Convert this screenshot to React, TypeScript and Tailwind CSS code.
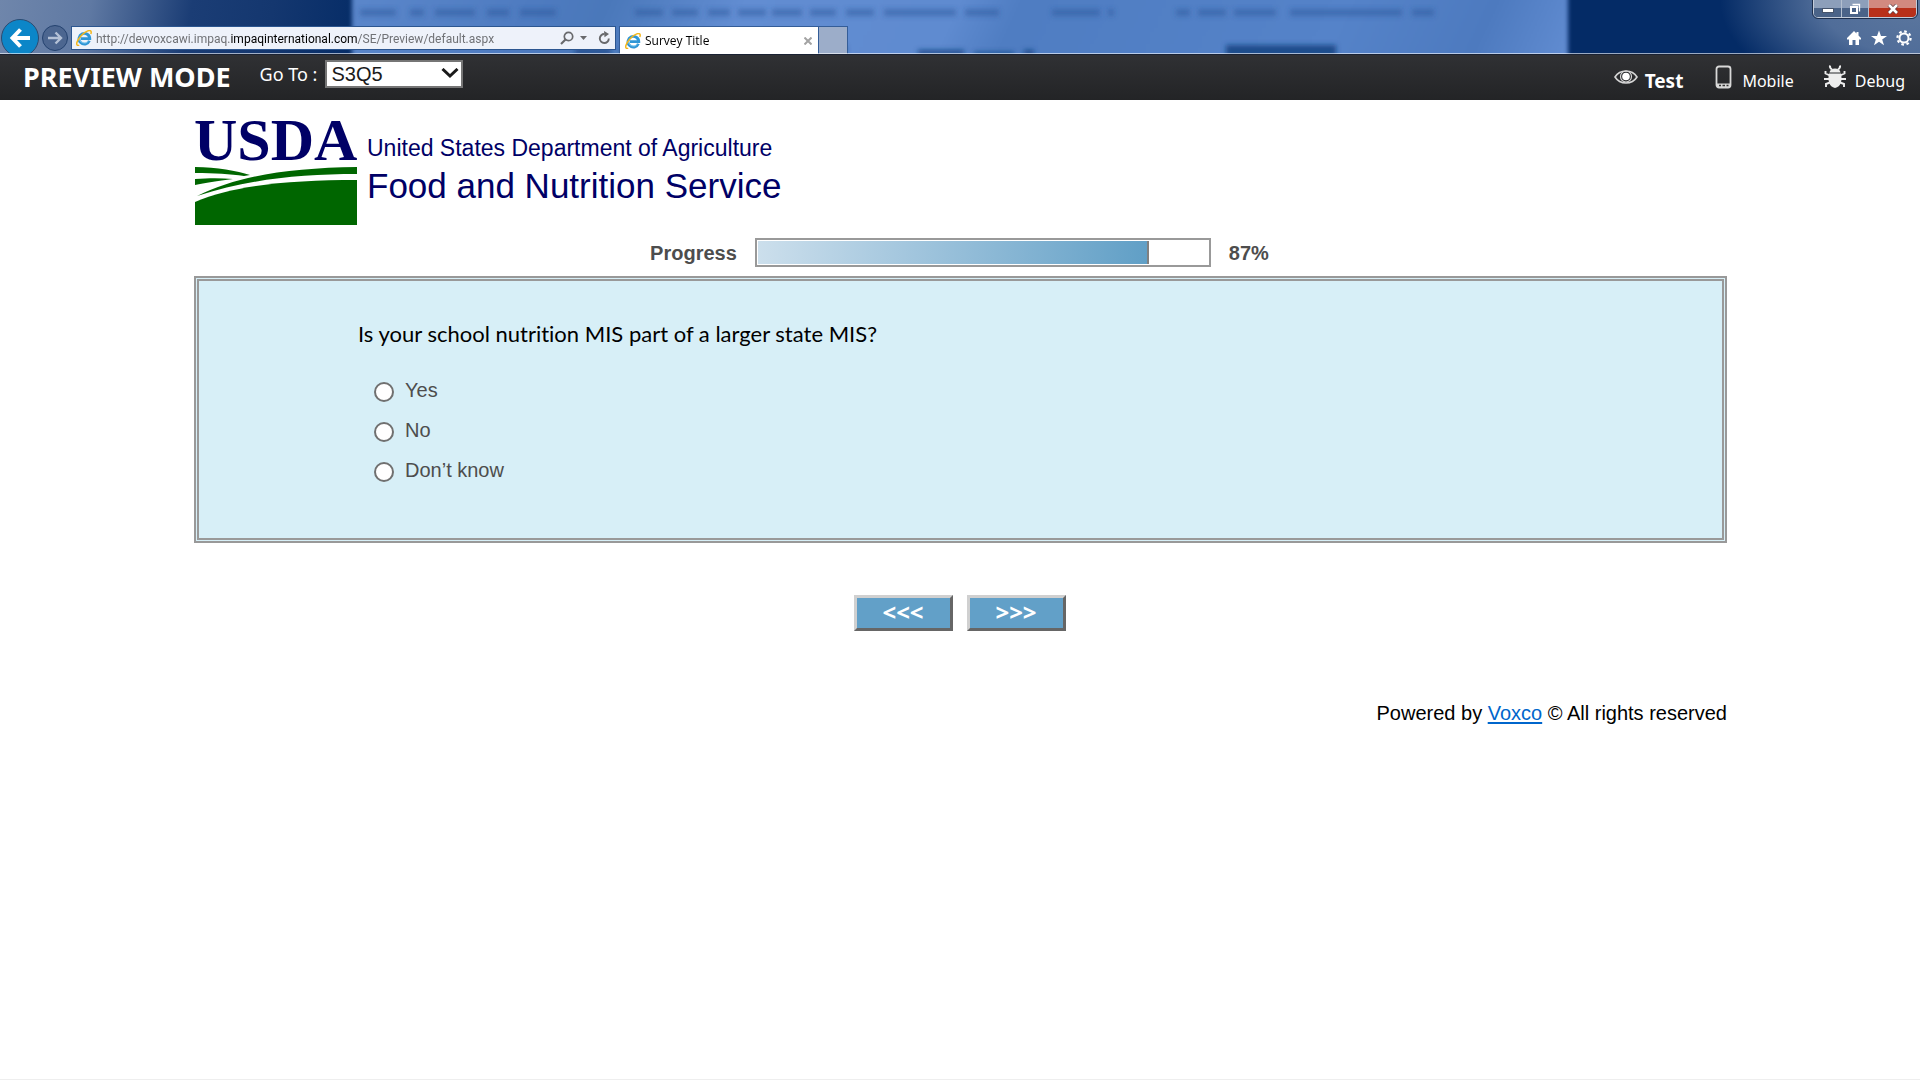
import React from 'react';

const ghostWords = [
  [360, 36], [410, 14], [435, 40], [487, 22], [520, 36], [635, 28], [672, 26], [708, 22], [738, 28], [772, 30], [810, 26], [846, 28],
  [884, 72], [965, 34], [1052, 48], [1108, 6], [1176, 14], [1198, 28], [1234, 42], [1290, 112], [1412, 22],
];

const ghostShapes = [
  [575, 49, 36, 5], [620, 50, 60, 4], [826, 46, 20, 7], [918, 50, 46, 5], [974, 52, 40, 3], [1024, 50, 10, 5], [1226, 45, 110, 12],
];

const options = ['Yes', 'No', 'Don’t know'];

function IeIcon() {
  return <svg viewBox="0 0 16 16" className="w-4 h-4 shrink-0" fill="none" aria-hidden="true">
      <path d="M13.4 10.8A5.400 5.400 0 1 1 13.800 8.600H5" stroke="#2f96d6" strokeWidth="2.800" />
      <path d="M12.600 10.800A4.900 4.900 0 0 1 3.600 7.600" stroke="#8fd2f5" strokeWidth="0.900" />
      <path d="M3.200 15.200C1.200 16 .2 14.600 1 12.200C2.400 8 7.400 2.400 11.800 .9C14.800 -.1 15.800 1.400 14.800 4" stroke="#f3b61b" strokeWidth="1.500" />
    </svg>;
}

function BrowserBar() {
  return <header className="relative h-[54px] overflow-hidden bg-[#042b66] font-['Open_Sans',sans-serif]">
      {/* glass background with the blurred window behind it */}
      <div className="absolute inset-0 bg-[linear-gradient(100deg,#6f86ab_0,#5f79a3_90px,#1b3d75_190px,#14376f_270px,#042b66_370px)]"></div>
      <div className="absolute inset-y-0 right-0 w-[220px] bg-[radial-gradient(ellipse_200px_110px_at_100%_0,#5d789f_0,#506d99_50%,transparent_100%)]"></div>
      <div className="absolute inset-y-[-10px] left-[352px] right-[352px] bg-[linear-gradient(115deg,#5b87cb_0,#4e7bc0_15%,#4a78ba_21%,#628dd2_32%,#5f8bd0_49%,#4f7dc2_54%,#5583c9_80%,#4d7abf_92%,#628dd2_100%)] blur-[2px]"></div>
      <svg className="absolute left-0 top-0 h-[54px] w-[1920px]" aria-hidden="true">
        <defs>
          <filter id="soft"><feGaussianBlur stdDeviation="2.800" /></filter>
        </defs>
        <g filter="url(#soft)">
          {ghostWords.map(([x, w]) => <rect key={x} x={x} y="9" width={w} height="7" fill="#2d569b" opacity="0.5" />)}
          {ghostShapes.map(([x, y, w, h]) => <rect key={x} x={x} y={y} width={w} height={h} fill="#143d7c" opacity="0.8" />)}
        </g>
      </svg>

      <div className="relative flex h-full">
        <button aria-label="Back" className="mt-[19px] ml-px flex size-[38px] shrink-0 items-center justify-center rounded-full border border-[#2c4a70] bg-[#0c86c8]">
          <svg viewBox="0 0 24 24" className="w-6 h-6" fill="none" stroke="#fff" strokeWidth="4">
            <path d="M22 12H5M12.500 3.500L4.500 12L12.500 20.500" />
          </svg>
        </button>
        <button aria-label="Forward" className="mt-[25px] ml-[3px] flex size-[26px] shrink-0 items-center justify-center rounded-full border border-[#24426f] bg-[#4c6690]">
          <svg viewBox="0 0 16 16" className="w-4 h-4" fill="none" stroke="#b4c1d6" strokeWidth="2.400">
            <path d="M1 8H13M8.500 2.500L14 8L8.500 13.500" />
          </svg>
        </button>
        <div className="mt-[26px] ml-[3px] flex h-6 w-[545px] shrink-0 items-center border border-[#2c5690] bg-[#eef2fa] pl-1 pr-1 text-[12px] text-[#707276]">
          <IeIcon />
          <span className="ml-1 flex-1 whitespace-nowrap pt-px font-['Roboto',sans-serif]">
            http://devvoxcawi.impaq.<span className="text-black">impaqinternational.com</span>/SE/Preview/default.aspx
          </span>
          <svg viewBox="0 0 14 14" className="w-3.5 h-3.5" fill="none" stroke="#68696c" strokeWidth="1.700">
            <circle cx="8.500" cy="5.500" r="4.200" />
            <path d="M5.500 8.500L1 13" strokeWidth="2.200" />
          </svg>
          <svg viewBox="0 0 7 4" className="mx-1.5 w-[7px] h-1" fill="#68696c"><path d="M0 0H7L3.500 4Z" /></svg>
          <svg viewBox="0 0 14 14" className="ml-1 w-3.5 h-3.5" fill="none" stroke="#68696c" strokeWidth="1.900">
            <path d="M7.500 3A4.500 4.500 0 1 0 11.800 7.500" />
            <path d="M7 0L12 3L7.500 6.200Z" fill="#68696c" stroke="none" />
          </svg>
        </div>
        <div className="mt-[26px] ml-[3px] flex h-7 w-[200px] shrink-0 items-center border border-b-0 border-[#345d98] bg-white pl-[5px] pr-1.5 text-[12px] text-black">
          <IeIcon />
          <span className="ml-1 flex-1">Survey Title</span>
          <svg viewBox="0 0 8 8" className="w-2 h-2" stroke="#a3a3a3" strokeWidth="2"><path d="M.5 .5L7.500 7.500M7.500 .5L.5 7.500" /></svg>
        </div>
        <div className="mt-[26px] h-7 w-[29px] shrink-0 border border-b-0 border-l-0 border-[#345d98] bg-[#9cadc9]"></div>

        <div className="ml-auto mr-[3px] flex shrink-0 flex-col items-end">
          <div className="flex h-[18px] overflow-hidden rounded-b-[5px] border border-t-0 border-[#c3ccda] outline outline-[#1d2f4d]">
            <button aria-label="Minimize" className="flex w-7 items-end justify-center border-r border-[#b3bfd0] bg-linear-to-b from-[#8d9fba] from-50% to-[#4a6388] to-50% pb-1">
              <span className="h-[5px] w-3 border border-[#46546b] bg-white"></span>
            </button>
            <button aria-label="Restore" className="flex w-[27px] items-center justify-center border-r border-[#b3bfd0] bg-linear-to-b from-[#8d9fba] from-50% to-[#4a6388] to-50%">
              <svg viewBox="0 0 12 12" className="w-3 h-3" fill="none" stroke="#fff">
                <path d="M3.500 1.500H10.500V8.500" strokeWidth="1.300" />
                <rect x="2" y="4" width="6" height="6" strokeWidth="2" />
              </svg>
            </button>
            <button aria-label="Close" className="flex w-[47px] items-center justify-center bg-linear-to-b from-[#d28a80] from-45% to-[#b8301a] to-50%">
              <svg viewBox="0 0 12 10" className="w-3 h-2.5" fill="none">
                <path d="M2 1L10 9M10 1L2 9" stroke="#5d3a40" strokeWidth="4" />
                <path d="M2 1L10 9M10 1L2 9" stroke="#fff" strokeWidth="2.600" />
              </svg>
            </button>
          </div>
          <div className="mt-3 mr-[5px] flex items-center gap-[9px]">
            <svg viewBox="0 0 16 16" className="w-4 h-4" fill="#fff"><path d="M8 1L1 8V9.500H3V15H6.500V10H9.500V15H13V9.500H15V8L12.500 5.500V2H10.500V3.500Z" /></svg>
            <svg viewBox="0 0 16 16" className="w-4 h-4" fill="#fff"><path d="M8 .5L10 6H16L11.200 9.400L13 15.200L8 11.700L3 15.200L4.800 9.400L0 6H6Z" /></svg>
            <svg viewBox="0 0 16 16" className="w-4 h-4" fill="none" stroke="#fff">
              <circle cx="8" cy="8" r="4.500" strokeWidth="2" />
              <circle cx="8" cy="8" r="6.600" strokeWidth="2.200" strokeDasharray="2.590 2.590" />
            </svg>
          </div>
        </div>
      </div>
      <div className="absolute inset-x-0 bottom-0 h-px bg-white/60"></div>
    </header>;
}

function PreviewBar() {
  return <div className="flex h-[46px] items-start border-t border-[#1a2233] bg-linear-to-b from-[#303134] to-[#232426] pl-[23px] pr-[15px] font-['Noto_Sans',sans-serif] text-[16px] leading-6 text-white">
      <h1 className="mt-2.5 text-[27px] leading-6 font-bold">PREVIEW MODE</h1>
      <label htmlFor="goto" className="mt-[7px] ml-[29px] text-[18px]">Go To :</label>
      <div className="relative mt-[5px] ml-2">
        <select id="goto" className="block h-7 w-[138px] appearance-none border-2 border-[#767676] bg-white pl-1 font-['Liberation_Sans',sans-serif] text-[20px] leading-6 text-[#1a1a1a]">
          <option>S3Q5</option>
        </select>
        <svg viewBox="0 0 18 12" className="pointer-events-none absolute right-1 top-2 w-[18px] h-3" fill="none" stroke="#1a1a1a" strokeWidth="3">
          <path d="M1.500 1L9 8L16.500 1" />
        </svg>
      </div>
      <nav className="ml-auto flex items-start">
        <a href="#test" className="flex text-[19px] font-bold">
          <svg viewBox="0 0 24 16" className="mt-[14px] mr-[7px] h-4 w-6" fill="none" stroke="#d5d5d5" strokeWidth="1.600">
            <path d="M1 8C6 0 18 0 23 8C18 16 6 16 1 8Z" />
            <circle cx="12" cy="7.500" r="5.500" strokeWidth="1.200" />
            <circle cx="12" cy="7.500" r="3.800" fill="#fff" stroke="none" />
          </svg>
          <span className="mt-[14px]">Test</span>
        </a>
        <a href="#mobile" className="ml-8 flex">
          <svg viewBox="0 0 18 24" className="mt-2.5 mr-[9px] h-6 w-[18px]" fill="none">
            <rect x="1.500" y="1.500" width="14" height="21" rx="2.500" stroke="#d8d8d8" strokeWidth="1.800" />
            <path d="M2 18.500H15V22H2Z" fill="#d8d8d8" />
            <path d="M4 20.500H6M7.500 20.500H10M11.500 20.500H13.500" stroke="#333" strokeWidth="1.400" />
          </svg>
          <span className="mt-[14px]">Mobile</span>
        </a>
        <a href="#debug" className="ml-[30px] flex">
          <svg viewBox="0 0 22 24" className="mt-2.5 mr-[9px] h-6 w-[22px]" fill="#eee" stroke="#eee">
            <path d="M6 .5Q5.500 3 8 4.500M16 .5Q16.500 3 14 4.500" fill="none" strokeWidth="2" />
            <path d="M5.500 7.500C6 2 16 2 16.500 7.500Z" stroke="none" />
            <path d="M5 8.500H17C18.500 15 17 22 11 23C5 22 3.500 15 5 8.500Z" stroke="none" />
            <path d="M6 10.500L1.500 8.500V6M16 10.500L20.500 8.500V6M5 14H0M17 14H22M6 17.500L2 19V22M16 17.500L20 19V22" fill="none" strokeWidth="1.900" />
          </svg>
          <span className="mt-[14px]">Debug</span>
        </a>
      </nav>
    </div>;
}

function UsdaLogo() {
  return <div className="flex pt-2 text-[#000066]">
      <div className="w-[164px] shrink-0">
        <div className="h-[58px] font-['Liberation_Serif',serif] text-[60px] leading-[64px] font-bold">USDA</div>
        <svg viewBox="0 0 162 58" className="ml-px mt-px h-[58px] w-[162px]" fill="#006600" aria-hidden="true">
          <path d="M0 35C40 18 96 13 162 13V58H0Z" />
          <path d="M2 29C45 8 95 1 162 0V7C105 7 55 12 2 29Z" />
          <path d="M0 0C22 0 42 4 55 8L49 9C35 7 20 6 0 6Z" />
          <path d="M0 12C14 11 26 11 38 12C22 14 10 16 0 18Z" />
        </svg>
      </div>
      <div className="ml-[9px] flex flex-col pt-6 font-['Liberation_Sans',sans-serif]">
        <span className="text-[23px] leading-8">United States Department of Agriculture</span>
        <span className="text-[35px] leading-[44px]">Food and Nutrition Service</span>
      </div>
    </div>;
}

export default function App() {
  const progress = 87;
  return <div className="min-h-screen border-b border-[#eee] bg-white font-['Liberation_Sans',sans-serif] text-[20px] leading-6">
      <BrowserBar />
      <PreviewBar />
      <main className="mx-auto w-4/5 px-px pl-0.5">
        <UsdaLogo />

        <div className="mt-[13px] mr-0.5 flex items-center justify-center font-bold text-[#4d4d4d]">
          <span id="progress-label">Progress</span>
          <div role="progressbar" aria-labelledby="progress-label" aria-valuenow={progress} className="mx-[18px] h-[29px] w-[456px] border-2 border-[#999] p-px">
            <div className="h-full border-r-2 border-[#808080] bg-linear-to-r from-[#ccdfec] to-[#609fc6]" style={{ width: `${progress}%` }}></div>
          </div>
          <span>{progress}%</span>
        </div>

        <form className="mt-[9px] border-[5px] border-double border-[#999] bg-[#d7eff7] pt-[37px] pb-10 pl-[159px]">
          <fieldset>
            <legend className="mb-7 font-['Lato',sans-serif] text-[22px] leading-8 text-black [font-variant-ligatures:none]">
              Is your school nutrition MIS part of a larger state MIS?
            </legend>
            {options.map(option => <label key={option} className="mb-4 ml-4 flex h-6 items-center gap-[11px] text-[#4d4d4d]">
                <input type="radio" name="answer" value={option} className="mt-1 size-5 shrink-0 appearance-none rounded-full border-2 border-[#707070] bg-white" />
                <span>{option}</span>
              </label>)}
          </fieldset>
        </form>

        <div className="mt-[52px] mr-0.5 flex justify-center gap-3.5">
          <button className="h-9 w-[99px] border-3 border-t-[#d0d0d0] border-r-[#666] border-b-[#666] border-l-[#d0d0d0] bg-[#62a0c8] pb-0.5 font-['Open_Sans',sans-serif] text-[24px] leading-6 font-bold text-white">&lt;&lt;&lt;</button>
          <button className="h-9 w-[99px] border-3 border-t-[#d0d0d0] border-r-[#666] border-b-[#666] border-l-[#d0d0d0] bg-[#62a0c8] pb-0.5 font-['Open_Sans',sans-serif] text-[24px] leading-6 font-bold text-white">&gt;&gt;&gt;</button>
        </div>

        <footer className="mt-[70px] text-right text-black">
          Powered by <a href="#voxco" className="text-[#0066cc] underline decoration-2 underline-offset-2">Voxco</a> © All rights reserved
        </footer>
      </main>
    </div>;
}
